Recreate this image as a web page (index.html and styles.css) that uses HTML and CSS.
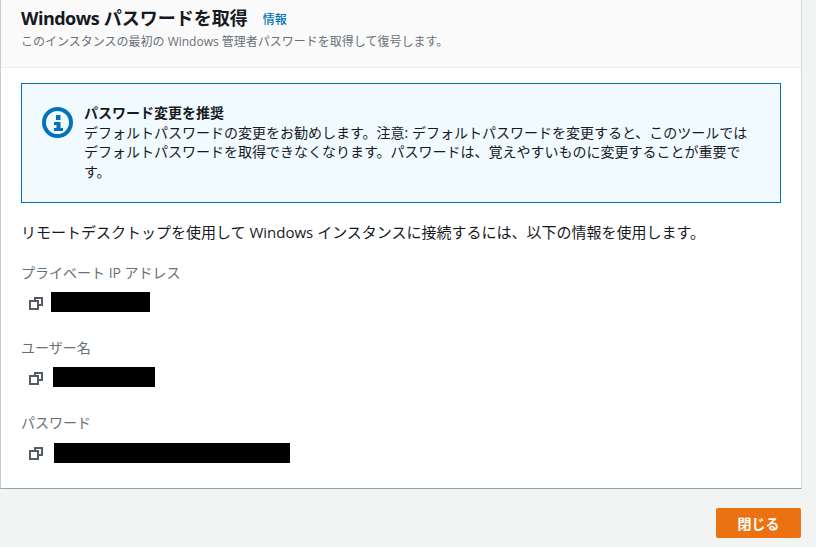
FILE: index.html
```html
<!DOCTYPE html>
<html lang="ja">
<head>
  <meta charset="UTF-8" />
  <meta name="viewport" content="width=device-width, initial-scale=1" />
  <title>Windows パスワードを取得</title>
  <link rel="stylesheet" href="styles.css">
</head>
<body>
  <div class="card">
    <div class="card-header">
      <div class="title-row">
        <h1 class="title"><span class="title-latin">Windows</span> パスワードを取得</h1>
        <a class="info-link" href="#">情報</a>
      </div>
      <div class="subtitle">このインスタンスの最初の Windows 管理者パスワードを取得して復号します。</div>
    </div>

    <div class="card-body">
      <div class="alert">
        <svg class="alert-icon" viewBox="0 0 32 32" width="32" height="32">
          <circle cx="15.500" cy="16.500" r="13.500" fill="none" stroke="#0073bb" stroke-width="4" />
          <rect x="14" y="9" width="4.500" height="5" fill="#0073bb" />
          <path d="M12 16h6.500v6H21v3H12v-3h2.500v-3H12z" fill="#0073bb" />
        </svg>
        <div class="alert-text">
          <div class="alert-title">パスワード変更を推奨</div>
          デフォルトパスワードの変更をお勧めします。注意: デフォルトパスワードを変更すると、このツールではデフォルトパスワードを取得できなくなります。パスワードは、覚えやすいものに変更することが重要です。
        </div>
      </div>

      <p class="intro">リモートデスクトップを使用して Windows インスタンスに接続するには、以下の情報を使用します。</p>

      <div class="field">
        <div class="field-label">プライベート IP アドレス</div>
        <div class="field-value">
          <svg class="copy-icon" viewBox="0 0 16 16" width="16" height="16">
            <path d="M7 5V3h7v7h-3" fill="none" stroke="#545b64" stroke-width="2" />
            <rect x="2" y="6" width="8" height="8" fill="none" stroke="#545b64" stroke-width="2" />
          </svg>
          <span class="redacted redacted-ip"></span>
        </div>
      </div>

      <div class="field">
        <div class="field-label">ユーザー名</div>
        <div class="field-value">
          <svg class="copy-icon" viewBox="0 0 16 16" width="16" height="16">
            <path d="M7 5V3h7v7h-3" fill="none" stroke="#545b64" stroke-width="2" />
            <rect x="2" y="6" width="8" height="8" fill="none" stroke="#545b64" stroke-width="2" />
          </svg>
          <span class="redacted redacted-user"></span>
        </div>
      </div>

      <div class="field field-pass">
        <div class="field-label">パスワード</div>
        <div class="field-value">
          <svg class="copy-icon" viewBox="0 0 16 16" width="16" height="16">
            <path d="M7 5V3h7v7h-3" fill="none" stroke="#545b64" stroke-width="2" />
            <rect x="2" y="6" width="8" height="8" fill="none" stroke="#545b64" stroke-width="2" />
          </svg>
          <span class="redacted redacted-pass"></span>
        </div>
      </div>
    </div>
  </div>

  <div class="footer">
    <button class="btn" type="button">閉じる</button>
  </div>
</body>
</html>
```

FILE: styles.css
```css
* {
  box-sizing: border-box;
}

body {
  margin: 0;
  font-family: "Open Sans", "Noto Sans CJK JP", sans-serif;
  font-size: 14px;
  line-height: 21px;
  background-color: #f2f3f3;
  color: #16191f;
  height: 547px;
  overflow: hidden;
}

.card {
  width: 802px;
  height: 489px;
  background-color: #fff;
  border-left: 1px solid #c5cdcd;
  border-right: 1px solid #d5dbdb;
  border-bottom: 1px solid #95a5a6;
}

.card-header {
  height: 68px;
  padding: 8px 20px 0;
  background-color: #fafafa;
  border-bottom: 1px solid #eaeded;
}

.title-row {
  display: flex;
  align-items: center;
  gap: 15px;
  height: 20px;
}

.title {
  margin: 0;
  font-size: 18px;
  font-weight: 700;
  line-height: 20px;
}

.title-latin {
  letter-spacing: -0.5px;
}

.info-link {
  margin-top: 2px;
  font-size: 12px;
  font-weight: 500;
  color: #0073bb;
  text-decoration: none;
}

.subtitle {
  margin-top: 4px;
  font-size: 12px;
  line-height: 20px;
  color: #687078;
}

.card-body {
  padding: 15px 20px 0;
}

.alert {
  display: flex;
  height: 120px;
  padding: 19px 20px 0;
  gap: 10px;
  background-color: #f1faff;
  border: 1px solid #0073bb;
}

.alert-icon {
  flex: none;
  margin-top: 3px;
}

.alert-title {
  font-weight: 700;
}

.alert-text {
  line-height: 19.5px;
}

.intro {
  margin: 19px 0 0;
  height: 22px;
  font-size: 15px;
}

.field {
  margin-top: 18px;
  height: 57px;
}

.field-label {
  color: #687078;
  height: 21px;
}

.field-value {
  display: flex;
  align-items: flex-start;
  gap: 7px;
  padding: 9px 0 0 7px;
}

.field-pass .field-value {
  padding-top: 10px;
}

.copy-icon {
  flex: none;
  margin-top: 3px;
}

.field-pass .copy-icon {
  margin-top: 2px;
}

.redacted {
  display: block;
  height: 20px;
  background-color: #000;
}

.redacted-ip {
  width: 99px;
}

.redacted-user {
  width: 102px;
  margin-left: 2px;
}

.redacted-pass {
  width: 236px;
  margin-left: 3px;
}

.footer {
  display: flex;
  justify-content: flex-end;
  padding: 19px 15px 0 0;
}

.btn {
  width: 85px;
  height: 30px;
  padding: 0;
  font-family: inherit;
  font-size: 14px;
  font-weight: 700;
  border: none;
  border-radius: 2px;
  background-color: #ec7211;
  color: #fff;
  cursor: pointer;
}
```
